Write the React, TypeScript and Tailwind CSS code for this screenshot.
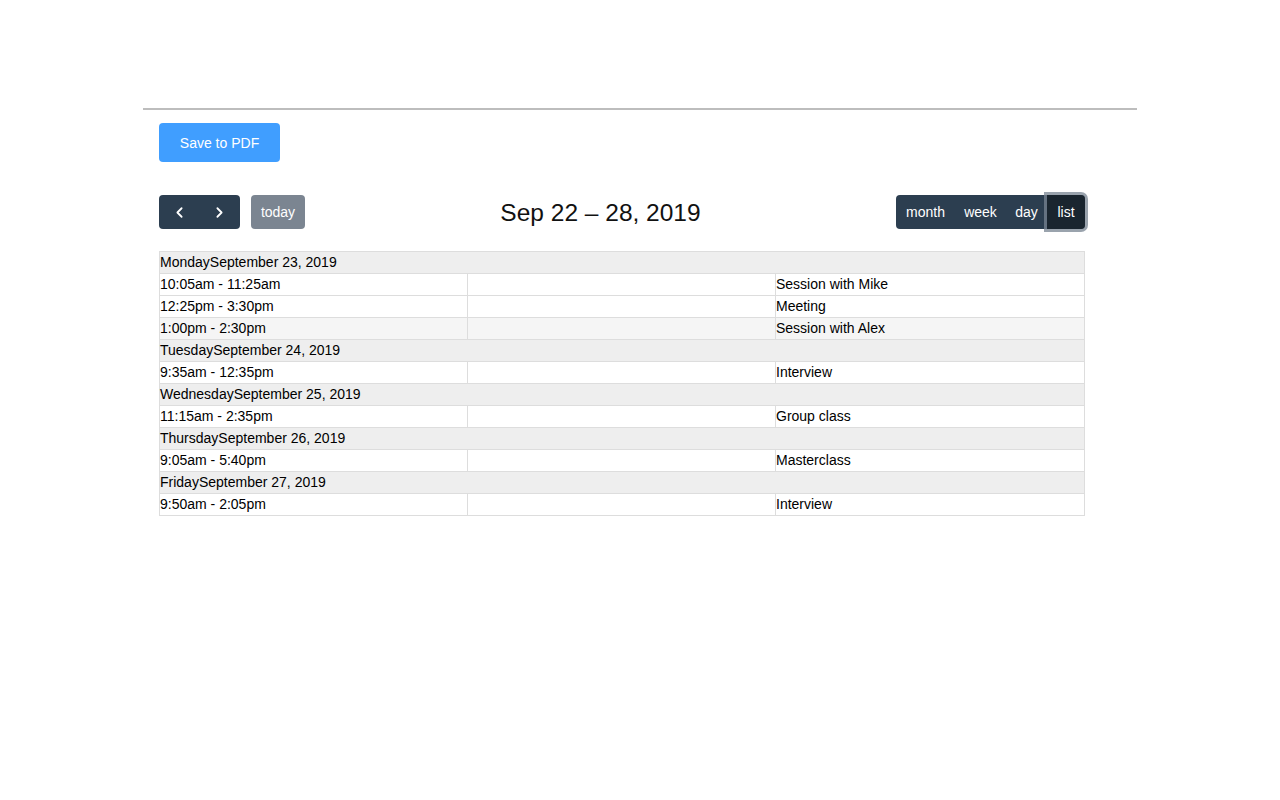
import { ChevronLeft, ChevronRight } from "lucide-react";

type Row = { day?: string; date?: string; time?: string; title?: string; hover?: boolean };

const rows: Row[] = [
  { day: "Monday", date: "September 23, 2019" },
  { time: "10:05am - 11:25am", title: "Session with Mike" },
  { time: "12:25pm - 3:30pm", title: "Meeting" },
  { time: "1:00pm - 2:30pm", title: "Session with Alex", hover: true },
  { day: "Tuesday", date: "September 24, 2019" },
  { time: "9:35am - 12:35pm", title: "Interview" },
  { day: "Wednesday", date: "September 25, 2019" },
  { time: "11:15am - 2:35pm", title: "Group class" },
  { day: "Thursday", date: "September 26, 2019" },
  { time: "9:05am - 5:40pm", title: "Masterclass" },
  { day: "Friday", date: "September 27, 2019" },
  { time: "9:50am - 2:05pm", title: "Interview" },
];

const views = [
  { name: "month", width: "w-[59px]" },
  { name: "week", width: "w-[51px]" },
  { name: "day", width: "w-[41px]" },
];

export default function App() {
  return (
    <div className="min-h-[800px] bg-white pt-[108px] font-['Liberation_Sans',Arial,sans-serif] text-[14px] text-black">
      <div className="mx-auto w-[994px]">
        <hr className="border-0 border-t-2 border-[#bdbdbd]" />
        <div className="px-4 pt-[13px]">
          <button className="h-[39px] w-[121px] rounded-[4px] bg-[#409eff] pt-px text-[14px] text-white">
            Save to PDF
          </button>

          <div className="mt-[33px] w-[926px]">
            <div className="mb-[22px] flex h-[34px] items-center justify-between">
              <div className="flex items-center gap-[11px]">
                <div className="flex h-[34px] overflow-hidden rounded-[4px] bg-[#2c3e50] text-white">
                  <button className="flex w-[40px] items-center justify-center">
                    <ChevronLeft size={17} strokeWidth={2.5} />
                  </button>
                  <button className="flex w-[41px] items-center justify-center">
                    <ChevronRight size={17} strokeWidth={2.5} />
                  </button>
                </div>
                <button className="h-[34px] w-[54px] rounded-[4px] bg-[#7b8591] text-white">today</button>
              </div>
              <h2 className="pt-[2px] text-[24.5px] leading-none text-[#111]">Sep 22 – 28, 2019</h2>
              <div className="flex h-[34px] rounded-[4px] bg-[#2c3e50] text-white">
                {views.map((v) => (
                  <button key={v.name} className={`h-[34px] ${v.width}`}>
                    {v.name}
                  </button>
                ))}
                <button className="h-[34px] w-[38px] rounded-r-[4px] bg-[#1a252f] shadow-[0_0_0_3px_rgba(120,132,145,0.75)]">
                  list
                </button>
              </div>
            </div>

            <table className="w-full table-fixed border-collapse border border-[#ddd] leading-[21px]">
              <colgroup>
                <col className="w-[308px]" />
                <col className="w-[308px]" />
                <col />
              </colgroup>
              <tbody>
                {rows.map((r, i) =>
                  r.day ? (
                    <tr key={i} className="bg-[#eeeeee]">
                      <td colSpan={3} className="h-[22px] border border-[#ddd] p-0">
                        {r.day}
                        {r.date}
                      </td>
                    </tr>
                  ) : (
                    <tr key={i} className={r.hover ? "bg-[#f5f5f5]" : "bg-white"}>
                      <td className="h-[22px] border border-[#ddd] p-0">{r.time}</td>
                      <td className="h-[22px] border border-[#ddd] p-0"></td>
                      <td className="h-[22px] border border-[#ddd] p-0">{r.title}</td>
                    </tr>
                  )
                )}
              </tbody>
            </table>
          </div>
        </div>
      </div>
    </div>
  );
}
